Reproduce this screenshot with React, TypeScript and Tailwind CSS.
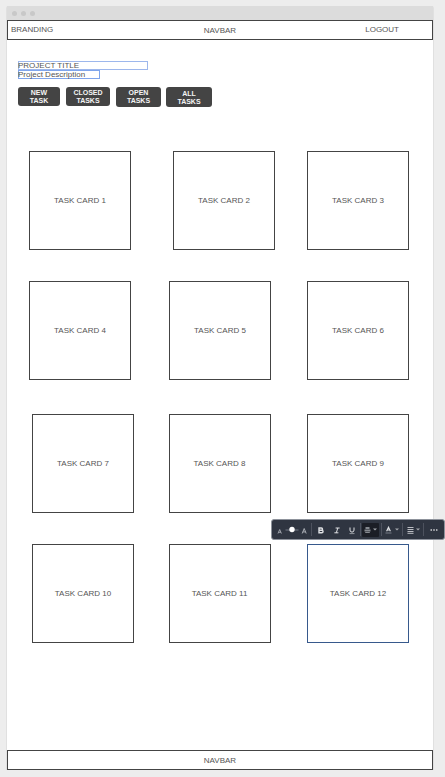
import React from "react";

const card =
  "flex h-[99px] w-[102px] shrink-0 items-center justify-center border bg-white text-[8px] leading-[10px] text-[#555]";

function Card({ n, className = "border-[#444]" }: { n: number; className?: string }) {
  return <article className={`${card} ${className}`}>TASK CARD {n}</article>;
}

const action =
  "flex items-center justify-center rounded-[3px] bg-[#444] text-center text-[7px] leading-[8px] font-bold text-[#f4f4f4]";

function Divider() {
  return <span className="h-[13px] w-px shrink-0 bg-[#4d525e]" />;
}

function Caret() {
  return (
    <svg className="h-[3px] w-[4px] shrink-0" viewBox="0 0 4 3" fill="#a4a8ae">
      <path d="M0 0.4h4L2 2.6z" />
    </svg>
  );
}

const tool = "flex h-[14px] shrink-0 items-center justify-center";

function Toolbar() {
  return (
    <div
      role="toolbar"
      aria-label="Text formatting"
      className="absolute -top-[25px] -right-[36px] flex h-[21px] w-[174px] items-center rounded-[3px] border border-[#8d929b] bg-[#2f3541] text-[#dfe1e4]"
    >
      <div className="flex w-[39px] shrink-0 items-center pl-[5px]">
        <svg className="h-[14px] w-[32px]" viewBox="0 0 32 14" fill="none">
          <path d="M1 10.5l1.7-4 1.7 4M1.6 9.3h2.2" stroke="#a8acb3" strokeWidth="0.9" />
          <path d="M8.5 7h13" stroke="#737985" strokeWidth="1" />
          <circle cx="15" cy="6.5" r="2.7" fill="#fff" />
          <path d="M25.2 10.5l2-5 2 5M25.8 8.9h2.8" stroke="#a8acb3" strokeWidth="1" />
        </svg>
      </div>
      <Divider />
      <button aria-label="Bold" className={`${tool} w-[18px]`}>
        <svg className="h-[10px] w-[8px]" viewBox="0 0 8 10" fill="none" stroke="currentColor" strokeWidth="1.4">
          <path d="M2 3h2.4a1.1 1.1 0 0 1 0 2.3H2zM2 5.3h2.8a1.2 1.2 0 0 1 0 2.5H2z" />
        </svg>
      </button>
      <button aria-label="Italic" className={`${tool} w-[13px]`}>
        <svg className="h-[10px] w-[8px]" viewBox="0 0 8 10" fill="none" stroke="currentColor">
          <path d="M2.6 3h4M1.4 7.8h4M4.8 3L3.3 7.8" />
        </svg>
      </button>
      <button aria-label="Underline" className={`${tool} w-[17px]`}>
        <svg className="h-[10px] w-[8px]" viewBox="0 0 8 10" fill="none" stroke="currentColor">
          <path d="M2 2.5v2.6a2 2 0 0 0 4 0V2.5" />
          <path d="M1.5 8.6h5" strokeWidth="0.8" stroke="#a8acb3" />
        </svg>
      </button>
      <Divider />
      <button aria-label="Vertical alignment" className={`${tool} ml-px w-[17px] gap-[2px] rounded-[1px] bg-[#1b1e26]`}>
        <svg className="h-[8px] w-[7px]" viewBox="0 0 7 8" fill="#858990">
          <path d="M1.5 1h4v2h-4zM0.5 3.4h6v2h-6zM1.2 5.9h4.6v1.2H1.2z" />
        </svg>
        <Caret />
      </button>
      <span className="w-[2px] shrink-0" />
      <Divider />
      <button aria-label="Text colour" className={`${tool} w-[20px] gap-[3px]`}>
        <svg className="h-[8px] w-[7px]" viewBox="0 0 7 8" fill="none" stroke="currentColor">
          <path d="M1.6 5.2L3.5 1.2l1.9 4M2.2 4h2.6" strokeWidth="1.1" />
          <path d="M0.5 7h6" stroke="#777c86" />
        </svg>
        <Caret />
      </button>
      <Divider />
      <button aria-label="Text alignment" className={`${tool} w-[20px] gap-[2px]`}>
        <svg className="h-[8px] w-[7px]" viewBox="0 0 7 8" stroke="currentColor">
          <path d="M0.5 1.5h6M0.5 3.5h6M0.5 5.5h6M0.5 7.3h6" strokeWidth="0.8" />
        </svg>
        <Caret />
      </button>
      <Divider />
      <button aria-label="More options" className={`${tool} w-[20px]`}>
        <svg className="h-[4px] w-[8px]" viewBox="0 0 8 4" fill="#fff">
          <circle cx="1.2" cy="2" r="0.8" />
          <circle cx="4" cy="2" r="0.8" />
          <circle cx="6.8" cy="2" r="0.8" />
        </svg>
      </button>
    </div>
  );
}

export default function App() {
  return (
    <div className="flex min-h-screen flex-col bg-[#ededed] pt-[6px] pr-[11px] pb-[7px] pl-[6px] font-['Liberation_Sans',Arial,sans-serif] text-[8px] leading-[10px] text-[#555]">
      <div className="flex grow flex-col rounded-t-[2px] border-x border-[#e0e0e0] bg-white">
        <div className="flex h-[14px] items-center gap-[4px] bg-[#dcdcdc] pl-[5px]">
          <span className="size-[5px] rounded-full bg-[#c8c8c8]" />
          <span className="size-[5px] rounded-full bg-[#c8c8c8]" />
          <span className="size-[5px] rounded-full bg-[#c8c8c8]" />
        </div>
        <nav className="grid h-[20px] grid-cols-[1fr_auto_1fr] items-center border border-[#444] px-[3px]">
          <a href="#home" className="pb-px">BRANDING</a>
          <span className="pt-[2px]">NAVBAR</span>
          <a href="#logout" className="pr-[30px] pb-px text-right">LOGOUT</a>
        </nav>

        <main className="flex grow flex-col">
          <div className="flex flex-col items-start pt-[21px] pl-[11px]">
            <input
              aria-label="Project title"
              defaultValue="PROJECT TITLE"
              className="h-[9px] w-[130px] inset-ring inset-ring-[#9db7ec] outline-none"
            />
            <input
              aria-label="Project description"
              defaultValue="Project Description"
              className="h-[9px] w-[82px] inset-ring inset-ring-[#7fa5ec] outline-none"
            />
          </div>
          <div className="flex items-start pt-[8px] pl-[11px]">
            <button className={`${action} h-[19px] w-[42px]`}>NEW<br />TASK</button>
            <button className={`${action} ml-[6px] h-[19px] w-[44px]`}>CLOSED<br />TASKS</button>
            <button className={`${action} ml-[6px] h-[20px] w-[45px]`}>OPEN<br />TASKS</button>
            <button className={`${action} ml-[5px] h-[20px] w-[46px] pt-px`}>ALL<br />TASKS</button>
          </div>

          <section className="pt-[44px] pr-[24px] pb-[107px]">
            <div className="flex justify-between pl-[22px]">
              <Card n={1} />
              <Card n={2} className="ml-[10px] border-[#444]" />
              <Card n={3} />
            </div>
            <div className="mt-[31px] flex justify-between pl-[22px]">
              <Card n={4} />
              <Card n={5} className="ml-[2px] border-[#444]" />
              <Card n={6} />
            </div>
            <div className="mt-[34px] flex justify-between pl-[25px]">
              <Card n={7} />
              <Card n={8} className="mr-[2px] border-[#444]" />
              <Card n={9} />
            </div>
            <div className="mt-[31px] flex justify-between pl-[25px]">
              <Card n={10} />
              <Card n={11} className="mr-[2px] border-[#444]" />
              <div className="relative">
                <Card n={12} className="border-[#37598c]" />
                <Toolbar />
              </div>
            </div>
          </section>
        </main>

        <footer className="flex h-[20px] items-center justify-center border border-[#444] pt-px">NAVBAR</footer>
      </div>
    </div>
  );
}
